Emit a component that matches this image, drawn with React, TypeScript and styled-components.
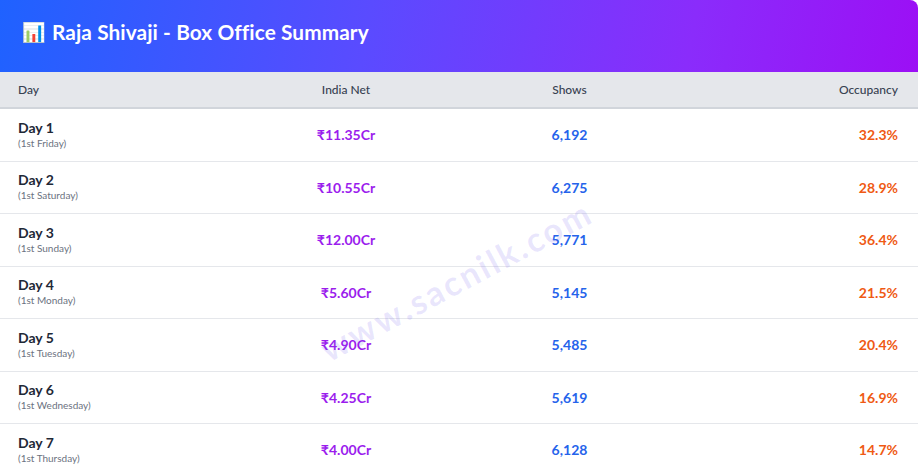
import styled, { createGlobalStyle } from "styled-components";

const GlobalStyle = createGlobalStyle`
  html, body {
    margin: 0;
    padding: 0;
    background: #ffffff;
  }
  body {
    font-family: Lato, "Noto Sans", sans-serif;
  }
`;

const Card = styled.div`
  position: relative;
  width: 918px;
  background: #ffffff;
  border-top-right-radius: 8px;
  overflow: hidden;
`;

const Header = styled.div`
  height: 72px;
  display: flex;
  align-items: center;
  gap: 6px;
  padding: 0 22px;
  box-sizing: border-box;
  background: linear-gradient(100deg, #1f62ff 0%, #5a4bff 40%, #8a2cfb 75%, #9c0ff5 100%);
`;

const Emoji = styled.span`
  font-size: 19px;
  line-height: 1;
  margin-top: -10px;
`;

const Title = styled.h1`
  margin: 0 0 10px;
  color: #ffffff;
  font-size: 20.8px;
  font-weight: 700;
  letter-spacing: 0.1px;
`;

const Row = styled.div<{ $head?: boolean }>`
  display: grid;
  grid-template-columns: 218px 220px 227px 1fr;
  align-items: center;
  height: ${(p) => (p.$head ? "37px" : "52.5px")};
  box-sizing: border-box;
  padding: 0 20px 0 18px;
  background: ${(p) => (p.$head ? "#e5e7eb" : "#ffffff")};
  border-bottom: ${(p) => (p.$head ? "2px solid #d1d5db" : "1px solid #e5e7eb")};
`;

const HeadCell = styled.div<{ $align: string }>`
  text-align: ${(p) => p.$align};
  color: #374151;
  font-size: 12px;
  font-weight: 500;
`;

const DayCell = styled.div`
  display: flex;
  flex-direction: column;
  gap: 1px;
  margin-top: -2px;
`;

const DayName = styled.span`
  color: #1f2937;
  font-size: 14px;
  font-weight: 700;
`;

const DaySub = styled.span`
  color: #6b7280;
  font-size: 10px;
`;

const Value = styled.div<{ $align: string; $color: string }>`
  text-align: ${(p) => p.$align};
  color: ${(p) => p.$color};
  font-size: 14px;
  font-weight: 700;
`;

const Watermark = styled.div`
  position: absolute;
  left: 456px;
  top: 280px;
  transform: translate(-50%, -50%) rotate(-28deg);
  color: rgba(120, 100, 240, 0.16);
  font-size: 34px;
  font-weight: 700;
  letter-spacing: 2.5px;
  pointer-events: none;
  white-space: nowrap;
`;

const days = [
  { day: "Day 1", sub: "(1st Friday)", net: "₹11.35Cr", shows: "6,192", occ: "32.3%" },
  { day: "Day 2", sub: "(1st Saturday)", net: "₹10.55Cr", shows: "6,275", occ: "28.9%" },
  { day: "Day 3", sub: "(1st Sunday)", net: "₹12.00Cr", shows: "5,771", occ: "36.4%" },
  { day: "Day 4", sub: "(1st Monday)", net: "₹5.60Cr", shows: "5,145", occ: "21.5%" },
  { day: "Day 5", sub: "(1st Tuesday)", net: "₹4.90Cr", shows: "5,485", occ: "20.4%" },
  { day: "Day 6", sub: "(1st Wednesday)", net: "₹4.25Cr", shows: "5,619", occ: "16.9%" },
  { day: "Day 7", sub: "(1st Thursday)", net: "₹4.00Cr", shows: "6,128", occ: "14.7%" },
];

const App = () => {
  return (
    <>
      <GlobalStyle />
      <Card>
        <Header>
          <Emoji>📊</Emoji>
          <Title>Raja Shivaji - Box Office Summary</Title>
        </Header>
        <Row $head>
          <HeadCell $align="left">Day</HeadCell>
          <HeadCell $align="center">India Net</HeadCell>
          <HeadCell $align="center">Shows</HeadCell>
          <HeadCell $align="right">Occupancy</HeadCell>
        </Row>
        {days.map((d) => (
          <Row key={d.day}>
            <DayCell>
              <DayName>{d.day}</DayName>
              <DaySub>{d.sub}</DaySub>
            </DayCell>
            <Value $align="center" $color="#9b1ded">{d.net}</Value>
            <Value $align="center" $color="#2563eb">{d.shows}</Value>
            <Value $align="right" $color="#ef5a14">{d.occ}</Value>
          </Row>
        ))}
        <Watermark>www.sacnilk.com</Watermark>
      </Card>
    </>
  );
};

export default App;
